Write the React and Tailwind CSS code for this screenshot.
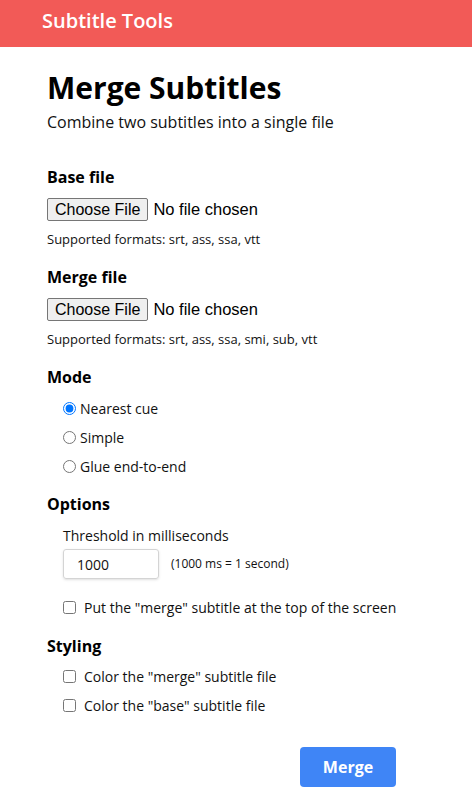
import React from "react";

function FileInput() {
  return (
    <div className="flex items-center h-[23px] mt-[10px]" style={{ fontFamily: '"Liberation Sans", Arial, sans-serif' }}>
      <span className="inline-flex items-center h-[23px] px-[7px] bg-[#efefef] border border-[#767676] rounded-[2px] text-[16px] text-black leading-none">Choose File</span>
      <span className="ml-[5px] text-[16.5px] text-black leading-none">No file chosen</span>
    </div>
  );
}

function Radio({ label, checked }) {
  return (
    <label className="flex items-center h-[29px] text-[14px] text-[#111]">
      <input type="radio" name="mode" defaultChecked={checked} className="m-0 w-[13px] h-[13px] mr-[4px]" />
      {label}
    </label>
  );
}

function Check({ label }) {
  return (
    <label className="flex items-center h-[29px] text-[14px] text-[#111]">
      <input type="checkbox" className="m-0 w-[13px] h-[13px] mr-[8px]" />
      {label}
    </label>
  );
}

export default function App() {
  return (
    <div className="bg-white min-h-[806px]" style={{ fontFamily: '"Open Sans", "Noto Sans", sans-serif' }}>
      <header className="h-[47px] bg-[#f25a57] flex items-center px-[42px] pb-[6px]">
        <span className="text-white text-[20px] font-semibold">Subtitle Tools</span>
      </header>
      <main className="px-[47px] pt-[21px] text-[#111]">
        <h1 className="text-[30px] font-bold leading-[40px] text-black">Merge Subtitles</h1>
        <p className="text-[16px] leading-[22px] mt-[3px]">Combine two subtitles into a single file</p>

        <h2 className="text-[16px] font-bold mt-[33px] leading-[22px] text-black">Base file</h2>
        <FileInput />
        <p className="text-[13px] mt-[9px] leading-[18px]">Supported formats: srt, ass, ssa, vtt</p>

        <h2 className="text-[16px] font-bold mt-[18px] leading-[22px] text-black">Merge file</h2>
        <FileInput />
        <p className="text-[13px] mt-[9px] leading-[18px]">Supported formats: srt, ass, ssa, smi, sub, vtt</p>

        <h2 className="text-[16px] font-bold mt-[18px] leading-[22px] text-black">Mode</h2>
        <div className="pl-[16px] mt-[6px]">
          <Radio label="Nearest cue" checked />
          <Radio label="Simple" />
          <Radio label="Glue end-to-end" />
        </div>

        <h2 className="text-[16px] font-bold mt-[12px] leading-[22px] text-black">Options</h2>
        <div className="pl-[16px]">
          <p className="text-[14px] mt-[11px] leading-[20px]">Threshold in milliseconds</p>
          <div className="flex items-center mt-[3px]">
            <div className="w-[96px] h-[30px] border border-[#d4d4d4] rounded-[3px] flex items-center px-[13px] text-[14px] shadow-sm">1000</div>
            <span className="ml-[12px] text-[12px]">(1000 ms = 1 second)</span>
          </div>
          <div className="mt-[14px]">
            <Check label={'Put the "merge" subtitle at the top of the screen'} />
          </div>
        </div>

        <h2 className="text-[16px] font-bold mt-[13px] leading-[22px] text-black">Styling</h2>
        <div className="pl-[16px] mt-[5px]">
          <Check label={'Color the "merge" subtitle file'} />
          <Check label={'Color the "base" subtitle file'} />
        </div>

        <div className="flex justify-end pr-[29px] mt-[27px]">
          <button className="w-[96px] h-[40px] bg-[#3f85f6] text-white font-bold text-[16px] rounded-[4px]">Merge</button>
        </div>
      </main>
    </div>
  );
}
